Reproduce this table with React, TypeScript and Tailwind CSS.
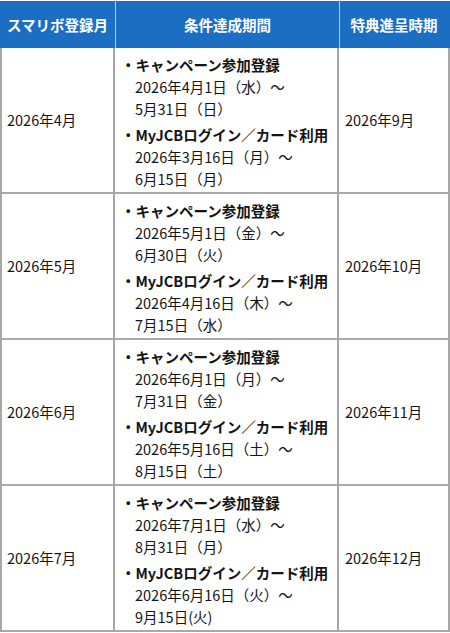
const rows = [
  {
    month: '2026年4月',
    entry: ['2026年4月1日（水）～', '5月31日（日）'],
    login: ['2026年3月16日（月）～', '6月15日（月）'],
    reward: '2026年9月',
  },
  {
    month: '2026年5月',
    entry: ['2026年5月1日（金）～', '6月30日（火）'],
    login: ['2026年4月16日（木）～', '7月15日（水）'],
    reward: '2026年10月',
  },
  {
    month: '2026年6月',
    entry: ['2026年6月1日（月）～', '7月31日（金）'],
    login: ['2026年5月16日（土）～', '8月15日（土）'],
    reward: '2026年11月',
  },
  {
    month: '2026年7月',
    entry: ['2026年7月1日（水）～', '8月31日（月）'],
    login: ['2026年6月16日（火）～', '9月15日(火)'],
    reward: '2026年12月',
  },
];

function Bullet({ title, lines }: { title: string; lines: string[] }) {
  return (
    <div>
      <p className="font-bold">・{title}</p>
      {lines.map((l) => (
        <p key={l} className="pl-[14px]">
          {l}
        </p>
      ))}
    </div>
  );
}

export default function App() {
  return (
    <div
      className="w-[450px] bg-white pt-px text-[14.5px] text-[#141414]"
      style={{ fontFamily: '"Noto Sans CJK JP", "Noto Sans", sans-serif' }}
    >
      {/* Header */}
      <div className="flex h-[47px] bg-[#1b6ec2] font-bold text-white">
        <div className="flex w-[116px] items-center justify-center border-r border-[#b9d3ee]">スマリボ登録月</div>
        <div className="flex w-[224px] items-center justify-center border-r border-[#b9d3ee]">条件達成期間</div>
        <div className="flex flex-1 items-center justify-center pr-[2px]">特典進呈時期</div>
      </div>

      {/* Body */}
      {rows.map((r) => (
        <div key={r.month} className="flex border-x-2 border-b-2 border-[#a8a8a8]">
          <div className="flex w-[113px] items-center border-r-2 border-[#a8a8a8] pl-[5px]">{r.month}</div>
          <div className="flex w-[224px] flex-col gap-[4px] border-r-2 border-[#a8a8a8] pb-[2px] pl-[6px] pt-[6px] leading-[22px]">
            <Bullet title="キャンペーン参加登録" lines={r.entry} />
            <Bullet title="MyJCBログイン／カード利用" lines={r.login} />
          </div>
          <div className="flex flex-1 items-center pl-[6px]">{r.reward}</div>
        </div>
      ))}
    </div>
  );
}
